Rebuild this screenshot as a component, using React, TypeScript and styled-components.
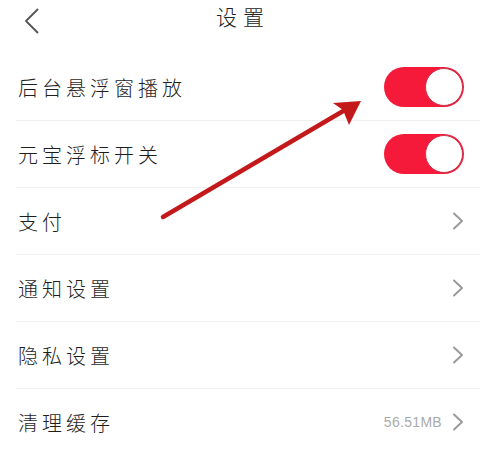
import React from "react";
import styled, { createGlobalStyle } from "styled-components";

const Global = createGlobalStyle`
  html, body { margin: 0; padding: 0; background: #ffffff; }
  body { font-family: "Noto Sans CJK SC", "Noto Sans", sans-serif; }
`;

const Page = styled.div`
  position: relative;
  width: 480px;
  height: 455px;
  overflow: hidden;
  background: #ffffff;
`;

const Header = styled.div`
  height: 54px;
  display: flex;
  align-items: center;
  justify-content: center;
  position: relative;
`;

const BackButton = styled.div`
  position: absolute;
  left: 24px;
  top: 8px;
  width: 16px;
  height: 26px;
  display: flex;
  align-items: center;
`;

const Title = styled.div`
  font-size: 21px;
  color: #222;
  letter-spacing: 6px;
  margin-left: 6px;
  margin-top: -22px;
  font-weight: 300;
`;

const List = styled.div`
  display: flex;
  flex-direction: column;
`;

const Row = styled.div`
  height: 67px;
  box-sizing: border-box;
  margin-left: 16px;
  padding-left: 2px;
  padding-right: 16px;
  border-bottom: 1px solid #f0f0f0;
  display: flex;
  align-items: center;
  justify-content: space-between;
`;

const Label = styled.span`
  font-size: 20px;
  color: #1e1e1e;
  letter-spacing: 4px;
  font-weight: 300;
`;

const Right = styled.div`
  display: flex;
  align-items: center;
  gap: 10px;
`;

const Meta = styled.span`
  font-family: "Liberation Sans", sans-serif;
  font-size: 14px;
  color: #aaa;
  letter-spacing: 0.3px;
`;

const Toggle = styled.div<{ $on: boolean }>`
  width: 80px;
  height: 40px;
  border-radius: 20px;
  box-sizing: border-box;
  background: ${(p) => (p.$on ? "#f51a39" : "#e5e5e5")};
  display: flex;
  align-items: center;
  justify-content: ${(p) => (p.$on ? "flex-end" : "flex-start")};
  padding: 0 1px;
`;

const Knob = styled.div`
  width: 38px;
  height: 38px;
  border-radius: 50%;
  box-sizing: border-box;
  background: #fff;
  border: 1.5px solid #c9354d;
`;

const Overlay = styled.svg`
  position: absolute;
  left: 0;
  top: 0;
  pointer-events: none;
`;

const Chevron = () => (
  <svg width="12" height="18" viewBox="0 0 12 18">
    <path d="M2 1.5 L10 9 L2 16.5" fill="none" stroke="#9a9a9a" strokeWidth="2" strokeLinecap="round" strokeLinejoin="round" />
  </svg>
);

type Item =
  | { label: string; kind: "toggle"; on: boolean }
  | { label: string; kind: "link"; meta?: string };

const items: Item[] = [
  { label: "后台悬浮窗播放", kind: "toggle", on: true },
  { label: "元宝浮标开关", kind: "toggle", on: true },
  { label: "支付", kind: "link" },
  { label: "通知设置", kind: "link" },
  { label: "隐私设置", kind: "link" },
  { label: "清理缓存", kind: "link", meta: "56.51MB" },
];

export default function App() {
  return (
    <Page>
      <Global />
      <Header>
        <BackButton>
          <svg width="16" height="26" viewBox="0 0 16 26">
            <path d="M13.5 1.5 L2 13 L13.5 24.5" fill="none" stroke="#555" strokeWidth="1.8" strokeLinecap="round" strokeLinejoin="round" />
          </svg>
        </BackButton>
        <Title>设置</Title>
      </Header>
      <List>
        {items.map((it) => (
          <Row key={it.label}>
            <Label>{it.label}</Label>
            {it.kind === "toggle" ? (
              <Toggle $on={it.on}>
                <Knob />
              </Toggle>
            ) : (
              <Right>
                {it.meta && <Meta>{it.meta}</Meta>}
                <Chevron />
              </Right>
            )}
          </Row>
        ))}
      </List>
      <Overlay width="480" height="455" viewBox="0 0 480 455">
        <line x1="163" y1="217" x2="350" y2="107" stroke="#c4191b" strokeWidth="4.5" strokeLinecap="round" />
        <polygon points="361,101 333,103 343,110 349,125" fill="#c4191b" />
      </Overlay>
    </Page>
  );
}
